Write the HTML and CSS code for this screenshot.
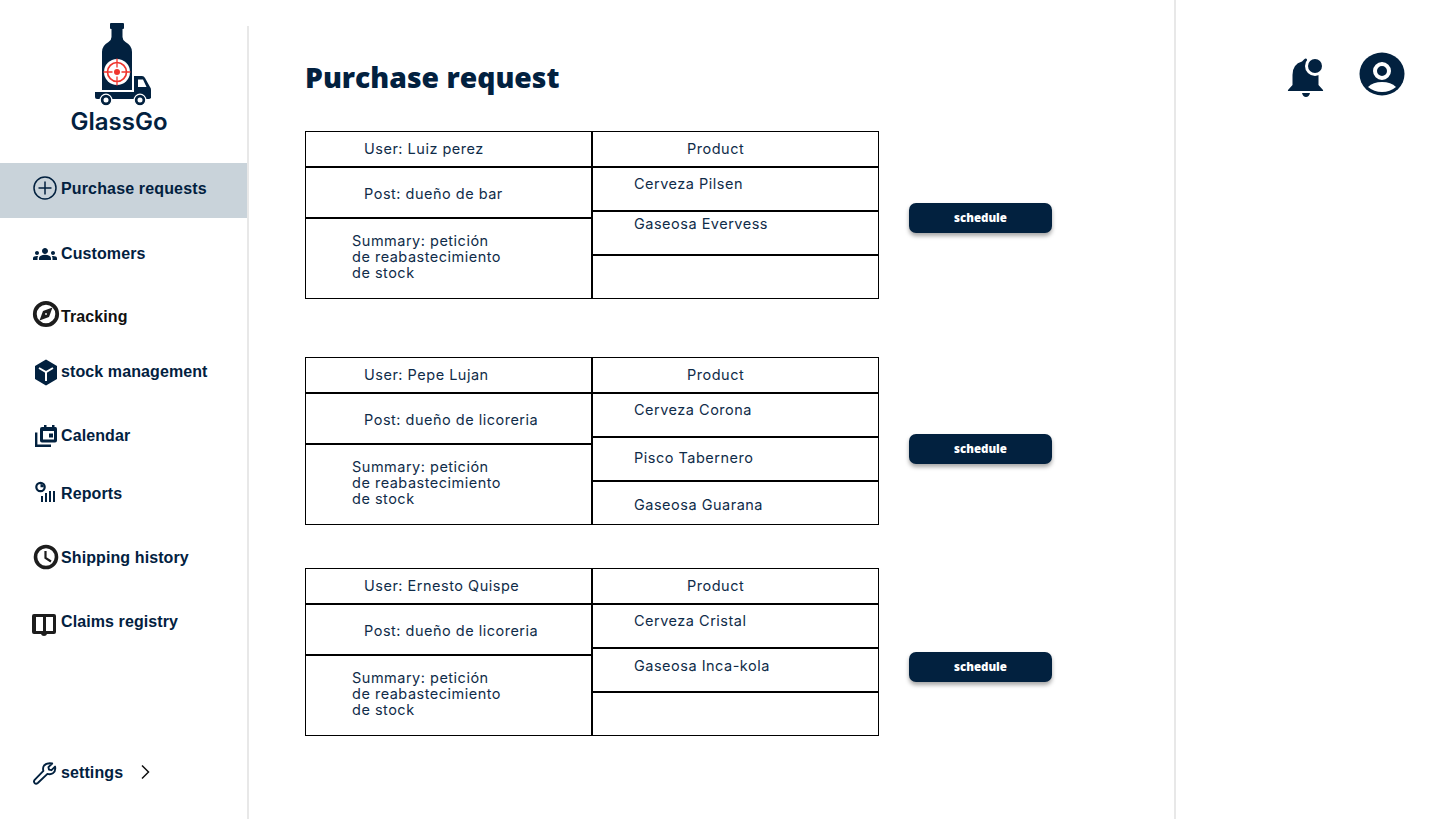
FILE: index.html
```html
<!DOCTYPE html>
<html lang="en">
<head>
	<meta charset="UTF-8">
	<title>GlassGo - Purchase request</title>
	<link rel="stylesheet" href="styles.css">
</head>
<body>
	<div class="page">
		<aside class="sidebar">
			<div class="logo">
				<svg class="logo-mark" viewBox="0 0 60 84" width="60" height="84">
					<path fill="#02213f" d="M18 1q0-1 1-1h12q1 0 1 1v4q0 1-1 1h-.5v8q0 3 3 5 6.500 3.500 6.500 10V67H10V29q0-6.500 6.500-10 3-2 3-5V6H19q-1 0-1-1z"/>
					<circle cx="25" cy="49" r="13" fill="#fff"/>
					<circle cx="25" cy="49" r="9.500" fill="none" stroke="#f0362e" stroke-width="1.700"/>
					<circle cx="25" cy="49" r="3" fill="#f0362e"/>
					<path stroke="#f0362e" stroke-width="1.300" d="M25 35.500v9M25 53.500v9M11.500 49h9M29.500 49h9"/>
					<path fill="#02213f" fill-rule="evenodd" d="M42 53h8q2 0 3 2l5 9q1 1 1 3v8H42zM46 56.500v7.500h8.500l-3.500-7.500z"/>
					<path fill="#02213f" d="M3 69h56v5q0 2-2 2H5q-2 0-2-2z"/>
					<circle cx="14" cy="77" r="5.800" fill="#02213f" stroke="#fff" stroke-width="1.200"/>
					<circle cx="14" cy="77" r="2.500" fill="#fff"/>
					<circle cx="48" cy="77" r="5.800" fill="#02213f" stroke="#fff" stroke-width="1.200"/>
					<circle cx="48" cy="77" r="2.500" fill="#fff"/>
				</svg>
				<div class="logo-name">GlassGo</div>
			</div>
			<nav class="nav">
				<a class="nav-item active" href="#">
					<svg class="nav-icon" viewBox="0 0 28 28"><circle cx="14" cy="14" r="11" fill="none" stroke="#02213f" stroke-width="1.500"/><path stroke="#02213f" stroke-width="1.500" d="M14 7.500v13M7.500 14h13"/></svg>
					Purchase requests
				</a>
				<a class="nav-item nav-customers" href="#">
					<svg class="nav-icon" viewBox="0 0 28 28"><path transform="translate(2 3)" fill="#02213f" d="M12 12.750c1.630 0 3.070.39 4.240.9 1.080.48 1.760 1.560 1.760 2.730V18H6v-1.610c0-1.180.68-2.260 1.760-2.730 1.170-.52 2.610-.91 4.240-.91zM4 13c1.100 0 2-.9 2-2s-.9-2-2-2-2 .9-2 2 .9 2 2 2zm1.130 1.100c-.37-.06-.74-.1-1.130-.1-.99 0-1.930.21-2.780.58C.48 14.900 0 15.620 0 16.430V18h4.500v-1.610c0-.83.23-1.610.63-2.290zM20 13c1.100 0 2-.9 2-2s-.9-2-2-2-2 .9-2 2 .9 2 2 2zm4 3.430c0-.81-.48-1.530-1.220-1.850-.85-.37-1.790-.58-2.780-.58-.39 0-.76.04-1.130.1.4.68.63 1.460.63 2.290V18H24v-1.570zM12 6c1.660 0 3 1.340 3 3s-1.340 3-3 3-3-1.340-3-3 1.340-3 3-3z"/></svg>
					Customers
				</a>
				<a class="nav-item nav-tracking" href="#">
					<svg class="nav-icon" viewBox="0 0 28 28"><circle cx="15" cy="12" r="11.200" fill="none" stroke="#1d1d1d" stroke-width="3.800"/><path fill="#1d1d1d" d="M21.500 5.500L18 15l-9.500 3.500L12 9z"/><circle cx="15" cy="12" r=".9" fill="#fff"/></svg>
					Tracking
				</a>
				<a class="nav-item nav-stock" href="#">
					<svg class="nav-icon" viewBox="0 0 28 28"><path fill="#02213f" d="M15 2.500l11 6.500v13l-11 6.500L4 22V9z"/><path fill="none" stroke="#fff" stroke-width="2" d="M8 11l7 4 7-4M15 15v9"/></svg>
					stock management
				</a>
				<a class="nav-item nav-calendar" href="#">
					<svg class="nav-icon" viewBox="0 0 28 28"><path fill="none" stroke="#02213f" stroke-width="2.400" d="M5.200 11.500v13.300H20"/><path fill="#02213f" fill-rule="evenodd" d="M9 8q0-2 2-2h2V4h2.500v2h5.500V4h2.500v2h1q1.500 0 1.500 2v11.500q0 2-2 2H11q-2 0-2-2zM12 10v8.500h11V10z"/><rect x="18" y="12.500" width="4" height="4" fill="#02213f"/></svg>
					Calendar
				</a>
				<a class="nav-item nav-reports" href="#">
					<svg class="nav-icon" viewBox="0 0 28 28"><circle cx="9.500" cy="8" r="4.200" fill="none" stroke="#02213f" stroke-width="2.200"/><path fill="#02213f" d="M9.500 5v3.300h3.300A3.300 3.300 0 0 0 9.500 5z"/><path stroke="#02213f" stroke-width="2" d="M11 23v-6M15 23v-9M19 23v-11M23 23v-11"/></svg>
					Reports
				</a>
				<a class="nav-item nav-shipping" href="#">
					<svg class="nav-icon" viewBox="0 0 28 28"><circle cx="15" cy="14" r="10.500" fill="none" stroke="#1d1d1d" stroke-width="3.600"/><path fill="none" stroke="#1d1d1d" stroke-width="2.200" d="M14.500 8v7l5.500 3.500"/></svg>
					Shipping history
				</a>
				<a class="nav-item nav-claims" href="#">
					<svg class="nav-icon" viewBox="0 0 28 28"><path fill="#1d1d1d" fill-rule="evenodd" d="M1 9q0-2 2-2h20q2 0 2 2v16q0 2-2 2h-7l-1 1.500-2 .5-2-.5-1-1.500H3q-2 0-2-2zM5 10v14h7V10zM15 10v14h7V10z"/></svg>
					Claims registry
				</a>
				<a class="nav-item nav-settings" href="#">
					<svg class="nav-icon" viewBox="0 0 28 28"><path transform="translate(.5 3) scale(.9)" fill="none" stroke="#02213f" stroke-width="2.100" stroke-linejoin="round" d="M23 2.800l-4.200 4 .6 2.700 2.800.7 4-4q1 5-2.500 7.500-2.500 1.700-6 .6L7 24.500q-2 1.500-3.500 0t0-3.500l9.700-10q-1-3.500.8-6Q17 1.800 23 2.800z"/></svg>
					settings
					<svg class="chevron" viewBox="0 0 10 16" width="10" height="16"><path fill="none" stroke="#111" stroke-width="1.500" d="M2 1.500L8.500 8 2 14.500"/></svg>
				</a>
			</nav>
		</aside>

		<main class="main">
			<h1 class="title">Purchase request</h1>

			<section class="request">
				<div class="req-table">
					<div class="col-info">
						<div class="cell cell-head">User: Luiz perez</div>
						<div class="cell cell-post">Post: dueño de bar</div>
						<div class="cell cell-summary">Summary: petición<br>de reabastecimiento<br>de stock</div>
					</div>
					<div class="col-products">
						<div class="cell cell-product-head">Product</div>
						<div class="cell cell-product">Cerveza Pilsen</div>
						<div class="cell cell-product p-high">Gaseosa Evervess</div>
						<div class="cell cell-product"></div>
					</div>
				</div>
				<button class="schedule btn-first">schedule</button>
			</section>

			<section class="request request-second">
				<div class="req-table">
					<div class="col-info">
						<div class="cell cell-head">User: Pepe Lujan</div>
						<div class="cell cell-post">Post: dueño de licoreria</div>
						<div class="cell cell-summary">Summary: petición<br>de reabastecimiento<br>de stock</div>
					</div>
					<div class="col-products">
						<div class="cell cell-product-head">Product</div>
						<div class="cell cell-product">Cerveza Corona</div>
						<div class="cell cell-product p-mid">Pisco Tabernero</div>
						<div class="cell cell-product p-low">Gaseosa Guarana</div>
					</div>
				</div>
				<button class="schedule btn-second">schedule</button>
			</section>

			<section class="request request-third">
				<div class="req-table">
					<div class="col-info">
						<div class="cell cell-head">User: Ernesto Quispe</div>
						<div class="cell cell-post">Post: dueño de licoreria</div>
						<div class="cell cell-summary">Summary: petición<br>de reabastecimiento<br>de stock</div>
					</div>
					<div class="col-products">
						<div class="cell cell-product-head">Product</div>
						<div class="cell cell-product">Cerveza Cristal</div>
						<div class="cell cell-product p-third">Gaseosa Inca-kola</div>
						<div class="cell cell-product"></div>
					</div>
				</div>
				<button class="schedule btn-third">schedule</button>
			</section>
		</main>

		<aside class="side-right">
			<svg class="bell" viewBox="0 0 40 40" width="40" height="40">
				<path fill="#02213f" d="M18 1.500q2-2 3 0V4q10 2 11.500 13V27l4.500 5q.5 1-1 1H3q-1.500 0-1-1l4.500-5V17Q6.500 6 16 3.500zM16 35h8q-1 4-4 4t-4-4z"/>
				<circle cx="29" cy="8" r="10" fill="#fff"/>
				<circle cx="29" cy="8" r="7" fill="#02213f"/>
			</svg>
			<svg class="user" viewBox="0 0 46 46" width="46" height="46">
				<ellipse cx="23" cy="23" rx="22.500" ry="21.500" fill="#02213f"/>
				<circle cx="23" cy="20" r="7" fill="#02213f" stroke="#fff" stroke-width="4"/>
				<path fill="#fff" d="M9 36Q14 31 23 31t14 5q-6 5-14 5T9 36z"/>
			</svg>
		</aside>
	</div>
</body>
</html>
```

FILE: styles.css
```css
*{
	margin: 0;
	padding: 0;
	box-sizing: border-box;
}
body{
	background: #fff;
	color: #02213f;
	font-family: "Inter", "Liberation Sans", sans-serif;
}
.page{
	display: flex;
	width: 1440px;
	height: 819px;
	overflow: hidden;
}

/* left menu */
.sidebar{
	width: 247px;
	flex-shrink: 0;
	display: flex;
	flex-direction: column;
}
.logo{
	width: 238px;
	height: 163px;
	padding-top: 23px;
	display: flex;
	flex-direction: column;
	align-items: center;
}
.logo-mark{
	display: block;
	margin-left: 6px;
}
.logo-name{
	font-family: "Inter", sans-serif;
	font-size: 24px;
	font-weight: 600;
	line-height: 28px;
	margin-top: 1px;
}
.nav{
	flex: 1;
	display: flex;
	flex-direction: column;
	padding-bottom: 31px;
}
.nav-item{
	display: flex;
	align-items: center;
	height: 32px;
	padding-left: 33px;
	padding-top: 2px;
	color: #02213f;
	font-family: "Liberation Sans", sans-serif;
	font-size: 16px;
	font-weight: 700;
	letter-spacing: .1px;
	text-decoration: none;
}
.nav-icon{
	width: 28px;
	height: 28px;
	flex-shrink: 0;
	margin: -2px 2px 0 -2px;
	overflow: visible;
}
.active{
	height: 55px;
	padding-bottom: 5px;
	background: #c9d3da;
	letter-spacing: .15px;
}
.nav-customers{ margin-top: 19px; }
.nav-tracking{ margin-top: 31px; color: #111; }
.nav-stock{ margin-top: 23px; }
.nav-calendar{ margin-top: 32px; }
.nav-reports{ margin-top: 26px; }
.nav-shipping{ margin-top: 32px; }
.nav-claims{ margin-top: 32px; }
.nav-settings{ margin-top: auto; }
.chevron{
	margin-left: 17px;
	margin-top: -2px;
}

/* middle */
.main{
	width: 927px;
	flex-shrink: 0;
	margin-top: 26px;
	padding-left: 56px;
	border-left: 2px solid #e8e8e8;
}
.title{
	margin-top: 33px;
	margin-bottom: 36px;
	font-family: "Open Sans", sans-serif;
	font-size: 28.300px;
	font-weight: 800;
	line-height: 36px;
}
.request{
	display: flex;
	align-items: flex-start;
	gap: 30px;
}
.request-second{ margin-top: 58px; }
.request-third{ margin-top: 43px; }
.req-table{
	display: flex;
	width: 574px;
	height: 168px;
	border: 1px solid #000;
	color: #0f2c49;
	font-size: 14.500px;
	letter-spacing: .5px;
	line-height: 16px;
}
.col-info{
	width: 285px;
	display: flex;
	flex-direction: column;
}
.col-products{
	flex: 1;
	display: flex;
	flex-direction: column;
	border-left: 2px solid #000;
}
.cell{
	display: flex;
	align-items: center;
}
.cell-head{
	height: 34px;
	padding-left: 58px;
}
.cell-post{
	height: 51px;
	padding-left: 58px;
	padding-top: 2px;
	border-top: 2px solid #000;
}
.cell-summary{
	display: block;
	flex: 1;
	padding-left: 46px;
	padding-top: 14px;
	border-top: 2px solid #000;
}
.cell-product-head{
	height: 34px;
	padding-left: 94px;
}
.cell-product{
	height: 44px;
	align-items: flex-start;
	padding-left: 41px;
	padding-top: 8px;
	border-top: 2px solid #000;
}
.col-products .cell:last-child{
	flex: 1;
}
.p-high{ padding-top: 4px; }
.p-third{ padding-top: 9px; }
.p-mid{ padding-top: 12px; }
.p-low{ padding-top: 15px; }

.schedule{
	width: 143px;
	height: 30px;
	padding-bottom: 2px;
	background: #02213f;
	border: none;
	border-radius: 7px;
	box-shadow: 0 3px 4px rgba(0,0,0,.35);
	color: #fff;
	font-family: "Open Sans", sans-serif;
	font-size: 11.500px;
	font-weight: 800;
}
.btn-first{ margin-top: 72px; }
.btn-second{ margin-top: 77px; }
.btn-third{ margin-top: 84px; }

/* right panel */
.side-right{
	flex: 1;
	display: flex;
	justify-content: flex-end;
	align-items: flex-start;
	gap: 33px;
	padding-top: 51px;
	padding-right: 35px;
	border-left: 2px solid #e8e8e8;
}
.bell{
	margin-top: 7px;
}
```
